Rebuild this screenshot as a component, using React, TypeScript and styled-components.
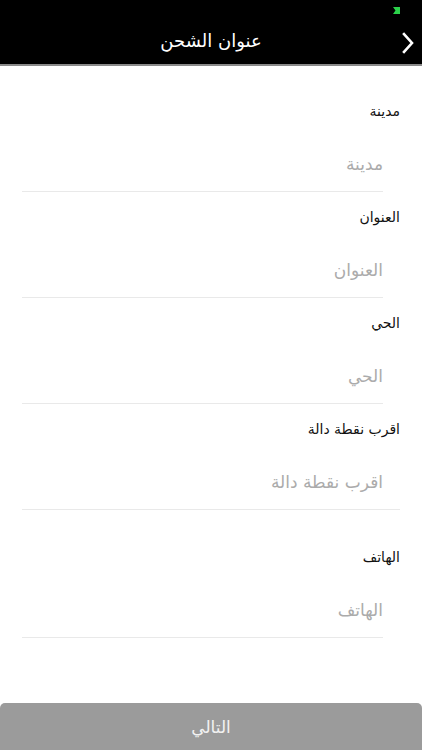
import React from "react";
import styled, { createGlobalStyle } from "styled-components";

const Global = createGlobalStyle`
  html, body { margin: 0; padding: 0; background: #fff; }
  body { font-family: "DejaVu Sans", "Noto Sans", sans-serif; }
  * { box-sizing: border-box; }
`;

const Page = styled.div`
  width: 422px;
  height: 750px;
  display: flex;
  flex-direction: column;
  background: #fff;
  direction: rtl;
  overflow: hidden;
`;

const Header = styled.header`
  height: 66px;
  background: #000;
  border-bottom: 2px solid #8a8a8a;
  display: flex;
  flex-direction: column;
  flex-shrink: 0;
`;

const StatusBar = styled.div`
  height: 20px;
  display: flex;
  align-items: flex-start;
  padding: 7px 22px 0 0;
`;

const NavBar = styled.div`
  position: relative;
  flex: 1;
  display: flex;
  align-items: center;
  justify-content: center;
`;

const Title = styled.h1`
  margin: 0;
  color: #fff;
  font-size: 18px;
  font-weight: normal;
  line-height: 24px;
  padding-bottom: 2px;
`;

const BackButton = styled.button`
  position: absolute;
  right: 7px;
  top: 12px;
  border: 0;
  background: none;
  padding: 0;
  display: flex;
`;

const Form = styled.div`
  flex: 1;
  display: flex;
  flex-direction: column;
  padding-top: 35px;
`;

const Field = styled.div<{ $extra?: number }>`
  display: flex;
  flex-direction: column;
  margin-top: ${(p) => p.$extra ?? 0}px;
  margin-bottom: 15px;
`;

const Label = styled.label`
  height: 20px;
  line-height: 20px;
  padding-right: 22px;
  font-size: 14px;
  color: #111;
`;

const InputBox = styled.div<{ $wide?: boolean }>`
  margin: 23px ${(p) => (p.$wide ? 22 : 39)}px 0 22px;
  padding-right: ${(p) => (p.$wide ? 17 : 0)}px;
  border-bottom: 1px solid #e9e9e9;
  padding-bottom: 4px;
`;

const Placeholder = styled.div`
  height: 43px;
  line-height: 40px;
  font-size: 17px;
  color: #ababab;
`;

const Spacer = styled.div`
  flex: 1;
`;

const NextButton = styled.button`
  height: 47px;
  width: 100%;
  border: 0;
  border-radius: 5px 5px 0 0;
  background: #9b9b9b;
  color: #f2f2f2;
  font-family: "DejaVu Sans", sans-serif;
  font-size: 17px;
  padding: 0;
`;

const Battery = () => (
  <svg width="7" height="7" viewBox="0 0 7 7">
    <path d="M0 0H7V7H0L2.5 3.5Z" fill="#2bd14a" />
  </svg>
);

const Chevron = () => (
  <svg width="14" height="22" viewBox="0 0 14 22">
    <path d="M3 2L11 11L3 20" fill="none" stroke="#fff" strokeWidth="2.6" strokeLinecap="square" />
  </svg>
);

const fields = [
  { label: "مدينة" },
  { label: "العنوان" },
  { label: "الحي" },
  { label: "اقرب نقطة دالة", wide: true },
  { label: "الهاتف", extra: 22 },
];

export default function App() {
  return (
    <Page>
      <Global />
      <Header>
        <StatusBar>
          <Battery />
        </StatusBar>
        <NavBar>
          <Title>عنوان الشحن</Title>
          <BackButton aria-label="back">
            <Chevron />
          </BackButton>
        </NavBar>
      </Header>
      <Form>
        {fields.map((f) => (
          <Field key={f.label} $extra={f.extra}>
            <Label>{f.label}</Label>
            <InputBox $wide={f.wide}>
              <Placeholder>{f.label}</Placeholder>
            </InputBox>
          </Field>
        ))}
        <Spacer />
      </Form>
      <NextButton>التالي</NextButton>
    </Page>
  );
}
